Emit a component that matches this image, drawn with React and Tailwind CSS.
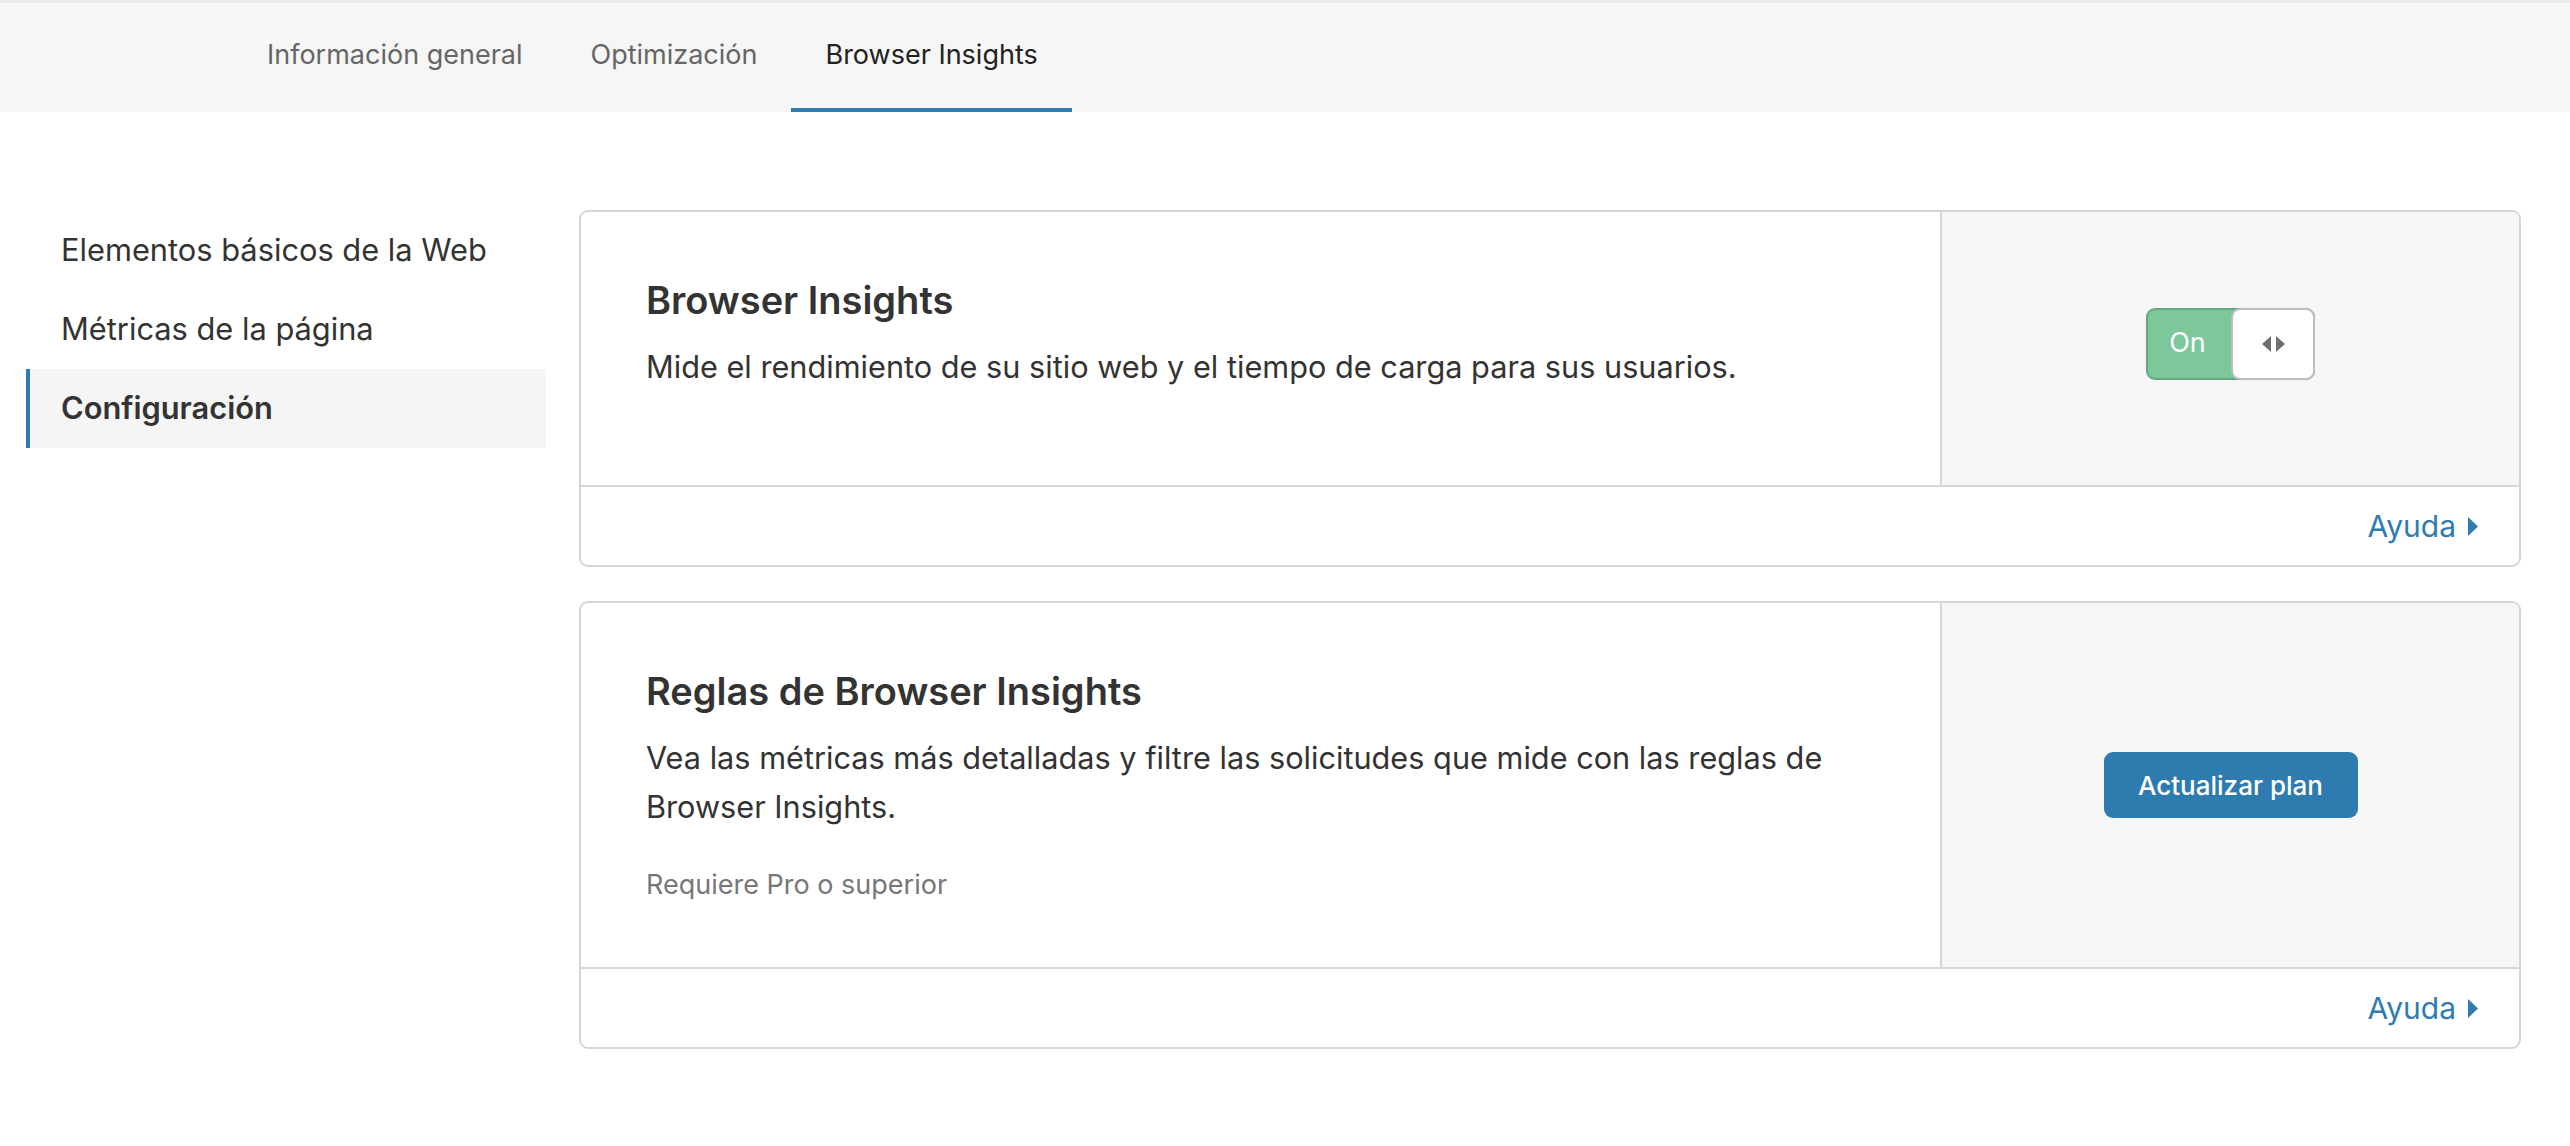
import React from 'react';

const FONT = "font-['Inter','Noto_Sans',sans-serif]";

const tabs = [
  { label: 'Información general', active: false },
  { label: 'Optimización', active: false },
  { label: 'Browser Insights', active: true },
];

const sideItems = [
  { label: 'Elementos básicos de la Web', active: false },
  { label: 'Métricas de la página', active: false },
  { label: 'Configuración', active: true },
];

const Caret = () => (
  <svg className="w-[12px] h-[21px]" viewBox="0 0 12 21" fill="currentColor">
    <path d="M1 1 L11 10.5 L1 20 Z" />
  </svg>
);

const HelpFooter = () => (
  <div className="h-[78px] flex items-center justify-end pr-[40px]">
    <a href="#" className="flex items-center gap-[11px] text-[30px] text-[#2f7bb2]">
      Ayuda
      <Caret />
    </a>
  </div>
);

const Toggle = () => (
  <div className="mb-[10px] flex w-[169px] h-[72px] rounded-[9px] border-2 border-[#64a67f] bg-[#7cc89b]">
    <div className="flex-1 flex items-center justify-center text-white text-[27px] pr-[4px]">On</div>
    <div className="w-[84px] -my-[2px] -mr-[2px] rounded-[9px] border-2 border-[#bcbcbc] bg-white flex items-center justify-center gap-[5px]">
      <svg className="w-[9px] h-[16px]" viewBox="0 0 9 16" fill="#6f6f6f">
        <path d="M9 0 L0 8 L9 16 Z" />
      </svg>
      <svg className="w-[9px] h-[16px]" viewBox="0 0 9 16" fill="#6f6f6f">
        <path d="M0 0 L9 8 L0 16 Z" />
      </svg>
    </div>
  </div>
);

const SettingCard = ({ title, children, action }) => (
  <div className="border-2 border-[#d6d6d6] rounded-[9px] overflow-hidden bg-white">
    <div className="flex border-b-2 border-[#d6d6d6] min-h-[275px]">
      <div className="flex-1 pt-[68px] pb-[64px] px-[65px]">
        <h3 className="text-[38px] leading-[41px] font-semibold text-[#333]">{title}</h3>
        <div className="mt-[21px]">{children}</div>
      </div>
      <div className="w-[579px] border-l-2 border-[#d6d6d6] bg-[#f6f6f6] flex items-center justify-center">
        {action}
      </div>
    </div>
    <HelpFooter />
  </div>
);

export default function App() {
  return (
    <div className={`min-h-screen bg-white ${FONT}`}>
      {/* Top tabs */}
      <div className="h-[112px] bg-[#f6f6f6] border-t-[3px] border-[#ebebeb] flex pl-[233px]">
        {tabs.map((t) => (
          <div
            key={t.label}
            className={`h-full px-[34px] flex items-center text-[27px] border-b-4 ${
              t.active ? 'border-[#2f7bb2] text-[#222]' : 'border-transparent text-[#666]'
            }`}
          >
            {t.label}
          </div>
        ))}
      </div>

      <div className="flex pt-[98px] pl-[26px] pr-[49px] gap-[33px]">
        {/* Sidebar */}
        <nav className="w-[520px] pt-[1px]">
          {sideItems.map((s) => (
            <div
              key={s.label}
              className={`h-[79px] flex items-center pl-[31px] text-[30.8px] border-l-4 ${
                s.active
                  ? 'border-[#2f7bb2] bg-[#f5f5f5] font-semibold text-[#333]'
                  : 'border-transparent text-[#333]'
              }`}
            >
              {s.label}
            </div>
          ))}
        </nav>

        {/* Main */}
        <main className="flex-1 flex flex-col gap-[34px]">
          <SettingCard title="Browser Insights" action={<Toggle />}>
            <p className="text-[30.7px] leading-[49px] text-[#333]">
              Mide el rendimiento de su sitio web y el tiempo de carga para sus usuarios.
            </p>
          </SettingCard>

          <SettingCard
            title="Reglas de Browser Insights"
            action={
              <button className="w-[254px] h-[66px] rounded-[9px] bg-[#2e7bb0] text-white text-[26px] font-medium">
                Actualizar plan
              </button>
            }
          >
            <p className="text-[30.7px] leading-[49px] text-[#333]">
              Vea las métricas más detalladas y filtre las solicitudes que mide con las reglas de Browser Insights.
            </p>
            <p className="mt-[36px] text-[27px] leading-[36px] text-[#777]">Requiere Pro o superior</p>
          </SettingCard>
        </main>
      </div>
    </div>
  );
}
